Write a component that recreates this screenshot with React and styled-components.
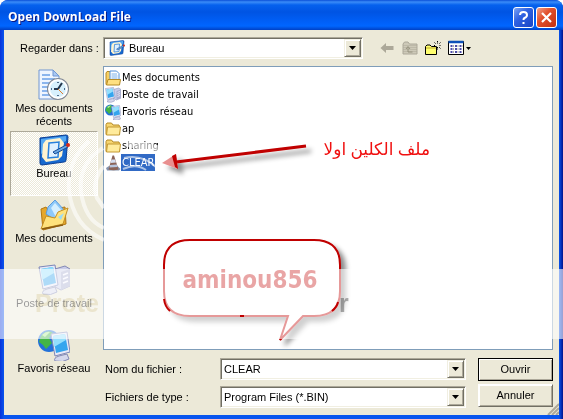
import { useState } from 'react';
import styled, { createGlobalStyle } from 'styled-components';

const places = [
  { id: 'recent', label: 'Mes documents récents' },
  { id: 'desktop', label: 'Bureau' },
  { id: 'documents', label: 'Mes documents' },
  { id: 'computer', label: 'Poste de travail' },
  { id: 'network', label: 'Favoris réseau' },
];

const files = [
  { name: 'Mes documents', icon: 'docfolder' },
  { name: 'Poste de travail', icon: 'computer' },
  { name: 'Favoris réseau', icon: 'network' },
  { name: 'ap', icon: 'folder' },
  { name: 'sharing', icon: 'folder' },
  { name: 'CLEAR', icon: 'cone' },
];

/* icons, all drawn on a 32 unit grid */
const Monitor = () => (
  <>
    <path d='M9 25 L17 23 L19 28 Q13 32 5 30 Q3 27 9 25Z' fill='#d5d8ec' stroke='#8489b5' />
    <path d='M1 3 L17 1 L20 21 L5 25Z' fill='#e8e9f7' stroke='#7d86b8' />
    <path d='M3 5 L15 3 L18 19 L6 22Z' fill='#35a5ee' />
    <path d='M3 5 L15 3 L16 9 L4 16Z' fill='#93defc' />
  </>
);

const drawings = {
  recent: (
    <>
      <path d='M1 1 H15 L21 7 V30 H1Z' fill='#eef5ff' stroke='#7096d2' />
      <path d='M15 1 V7 H21Z' fill='#a9c9f4' stroke='#7096d2' />
      <path d='M4 6 H12 M4 10 H17 M4 14 H12 M4 18 H10 M4 22 H10 M4 26 H12' stroke='#8bb5ed' strokeWidth='2' />
      <circle cx='20' cy='20' r='11' fill='#7f8793' />
      <circle cx='20' cy='20' r='9' fill='#d7f0fc' stroke='#fff' strokeWidth='2' />
      <path d='M20 13 V14 M27 20 H26 M20 27 V26 M13 20 H14' stroke='#506c8a' strokeWidth='2' />
      <path d='M24 14 L20 20 H16' fill='none' stroke='#26394f' strokeWidth='2' />
      <path d='M20 20 L25 25' stroke='#e07c2c' strokeWidth='1' />
    </>
  ),
  desktop: (
    <>
      <path d='M2 4 L28 1 Q30 1 30 3 L28 26 Q28 28 26 28 L4 31 Q2 31 2 29Z' fill='#1769cf' stroke='#0a3e94' />
      <path d='M3 5 L28 2 L28 7 L3 20Z' fill='#55a8f2' />
      <path d='M8 6 L22 4 L26 9 L24 22 L20 26 L8 28 L4 23 L5 10Z' fill='#fff3cf' />
      <path d='M11 9 L21 8 L20 23 L10 24Z' fill='#dff0ff' stroke='#2980dc' strokeWidth='1.5' />
      <path d='M15 18 L28 11 L30 13 L17 20Z' fill='#6aa8e4' stroke='#174a94' />
      <circle cx='30' cy='11' r='2' fill='#d82b18' />
    </>
  ),
  documents: (
    <>
      <path d='M3 10 L8 8 L10 11 L27 8 L28 25 L5 31Z' fill='#e5a72b' stroke='#b27814' />
      <path d='M10 8 L17 1 L27 12 L19 22 L8 15Z' fill='#8ec9fa' stroke='#599bdc' />
      <path d='M13 9 L17 4 L24 12 L18 18Z' fill='#d5efff' />
      <path d='M3 30 L8 17 L17 19 L20 13 L30 9 L25 25Z' fill='#ffe27c' stroke='#c58f22' />
      <path d='M20 18 L26 14 L23 21Z' fill='#9cdaf5' />
      <path d='M4 30 L25 26' stroke='#8b5c12' strokeWidth='1.5' />
    </>
  ),
  computer: (
    <>
      <path d='M17 5 L27 2 L32 5 V22 L23 26 L17 23Z' fill='#c9cce8' stroke='#8489b5' />
      <path d='M23 8 L32 5 V22 L23 26Z' fill='#a9adcf' />
      <path d='M25 11 L30 9 M25 15 L30 13 M25 19 L30 17' stroke='#f5f6ff' strokeWidth='1.5' />
      <Monitor />
    </>
  ),
  network: (
    <>
      <circle cx='11' cy='12' r='11' fill='#2371d9' />
      <path d='M3 7 Q9 0 15 4 L11 9 L14 14 L8 20 L5 16 L1 13Z' fill='#43b546' />
      <path d='M4 6 Q8 2 12 3 L7 8Z' fill='#b2ee92' />
      <g transform='translate(12 2)'>
        <Monitor />
      </g>
    </>
  ),
  folder: (
    <>
      <path d='M2 7 L4 4 H13 L16 8 H28 L29 11 V27 H2Z' fill='#f6d571' stroke='#b58a25' strokeWidth='2' />
      <path d='M5 12 H31 L29 28 H3Z' fill='#ffeb9c' stroke='#c39831' strokeWidth='2' />
    </>
  ),
  docfolder: (
    <>
      <path d='M2 6 L4 3 H12 V29 H2Z' fill='#f6cf63' stroke='#b58a25' strokeWidth='2' />
      <path d='M10 2 H23 L28 7 V22 H10Z' fill='#fff' stroke='#4f8dd8' strokeWidth='2' />
      <path d='M13 8 H24 M13 12 H25 M13 16 H25' stroke='#78afe9' strokeWidth='2' />
      <path d='M6 19 H31 L29 30 H3Z' fill='#ffe082' stroke='#b58a25' strokeWidth='2' />
    </>
  ),
  cone: (
    <>
      <path d='M2 26 L8 22 H25 L31 28 L28 31 H4Z' fill='#8493ae' />
      <path d='M15 1 H18 L27 29 Q17 32 7 29Z' fill='#8b6458' />
      <path d='M13 9 L20 9 L22 15 L11 16Z' fill='#d5e0f2' />
      <path d='M10 20 L24 19 L25 24 L9 25Z' fill='#b7c6df' />
    </>
  ),
  back: <path d='M3 16 L14 6 V12 H29 V20 H14 V26Z' fill='#aca899' />,
  up: (
    <>
      <path d='M2 28 V8 L5 4 H12 L15 8 H30 V28Z' fill='#cdc9b8' stroke='#aca899' strokeWidth='2' />
      <path d='M3 11 H29 M3 15 H29 M3 19 H29 M3 23 H29' stroke='#aca899' strokeWidth='2' strokeDasharray='2 2' />
      <path d='M12 24 V15 M8 18 L12 13 L16 18 M12 24 H21' fill='none' stroke='#96927f' strokeWidth='2' />
    </>
  ),
  newfolder: (
    <>
      <path d='M1 29 V13 L4 10 H10 L13 13 H23 V29Z' fill='#ffff70' stroke='#000' strokeWidth='2' />
      <path d='M2 16 H22' stroke='#bba72b' strokeWidth='2' />
      <path d='M25 2 V8 M25 14 V20 M18 11 H21 M29 11 H32 M19 5 L22 8 M31 5 L28 8 M28 14 L31 17' stroke='#000' strokeWidth='2' strokeDasharray='2 1' />
    </>
  ),
  views: (
    <>
      <path d='M1 3 H31 V29 H1Z' fill='#fff' stroke='#000' strokeWidth='2' />
      <path d='M1 4 H31' stroke='#0d50b9' strokeWidth='5' />
      <path d='M5 12 H9 M14 12 H18 M23 12 H27 M5 18 H9 M14 18 H18 M23 18 H27 M5 24 H9 M14 24 H18 M23 24 H27' stroke='#12128c' strokeWidth='3' />
      <path d='M10 12 H12 M19 12 H21 M28 12 H29 M10 18 H12 M19 18 H21 M10 24 H12 M19 24 H21' stroke='#555' strokeWidth='2' />
    </>
  ),
};

const Icon = ({ name, size = 16 }) => (
  <svg width={size} height={size} viewBox='0 0 32 32' aria-hidden='true'>
    {drawings[name]}
  </svg>
);

const Triangle = () => (
  <svg width='7' height='4' viewBox='0 0 7 4' aria-hidden='true'>
    <path d='M0 0 H7 L3.5 4Z' fill='#000' />
  </svg>
);

const App = () => {
  const [place, setPlace] = useState('desktop');
  const [selected, setSelected] = useState('CLEAR');
  const [fileName, setFileName] = useState('CLEAR');

  const pickFile = (name) => {
    setSelected(name);
    setFileName(name);
  };

  return (
    <>
      <GlobalStyle />
      <Window>
        <TitleBar>
          <h1>Open DownLoad File</h1>
          <CaptionButton type='button' aria-label='Aide'>
            <svg width='19' height='19' viewBox='0 0 19 19'>
              <path d='M6 7 Q6 4 9.500 4 Q13 4 13 7 Q13 9 10.500 10 Q9.500 10.500 9.500 12 M9.500 14 V16' fill='none' stroke='#fff' strokeWidth='2' />
            </svg>
          </CaptionButton>
          <CaptionButton type='button' aria-label='Fermer' $close>
            <svg width='19' height='19' viewBox='0 0 19 19'>
              <path d='M5 5 L14 14 M14 5 L5 14' stroke='#fff' strokeWidth='2.200' />
            </svg>
          </CaptionButton>
        </TitleBar>

        <Body>
          <LookIn>
            <label htmlFor='folder'>Regarder dans :</label>
            <Combo>
              <Icon name='desktop' />
              <select id='folder'>
                <option>Bureau</option>
              </select>
              <Arrow>
                <Triangle />
              </Arrow>
            </Combo>
            <Toolbar>
              <ToolButton type='button' aria-label='Précédent' disabled>
                <Icon name='back' />
              </ToolButton>
              <ToolButton type='button' aria-label='Dossier parent' disabled>
                <Icon name='up' />
              </ToolButton>
              <ToolButton type='button' aria-label='Nouveau dossier'>
                <Icon name='newfolder' />
              </ToolButton>
              <ToolButton type='button' aria-label='Affichage'>
                <Icon name='views' />
                <svg width='5' height='3' viewBox='0 0 5 3' aria-hidden='true'>
                  <path d='M0 0 H5 L2.5 3Z' fill='#000' />
                </svg>
              </ToolButton>
            </Toolbar>
          </LookIn>

          <Columns>
            <Places>
              {places.map(({ id, label }) => (
                <Place key={id} type='button' $active={place === id} onClick={() => setPlace(id)}>
                  <Icon name={id} size={32} />
                  <span>{label}</span>
                </Place>
              ))}
            </Places>

            <Main>
              <FileList>
                {files.map(({ name, icon }) => (
                  <li key={name}>
                    <FileButton type='button' $active={selected === name} onClick={() => pickFile(name)}>
                      <Icon name={icon} />
                      <span>{name}</span>
                    </FileButton>
                  </li>
                ))}
              </FileList>

              <Footer>
                <Fields>
                  <label htmlFor='name'>Nom du fichier :</label>
                  <Combo>
                    <input id='name' value={fileName} onChange={(e) => setFileName(e.target.value)} />
                    <Arrow>
                      <Triangle />
                    </Arrow>
                  </Combo>
                  <label htmlFor='type'>Fichiers de type :</label>
                  <Combo>
                    <select id='type'>
                      <option>Program Files (*.BIN)</option>
                    </select>
                    <Arrow>
                      <Triangle />
                    </Arrow>
                  </Combo>
                </Fields>
                <Actions>
                  <DialogButton type='button' $primary>
                    Ouvrir
                  </DialogButton>
                  <DialogButton type='button'>Annuler</DialogButton>
                </Actions>
              </Footer>
            </Main>
          </Columns>
        </Body>
        <Grip width='12' height='12' viewBox='0 0 12 12' aria-hidden='true'>
          <path d='M1 12 L12 1 M5 12 L12 5 M9 12 L12 9' stroke='#aca899' strokeWidth='2' />
        </Grip>

        {/* notes and watermark over the dialog */}
        <Overlay>
          <defs>
            <filter id='shadow' x='-20%' y='-20%' width='150%' height='160%'>
              <feDropShadow dx='5' dy='5' stdDeviation='2.500' floodColor='#000' floodOpacity='.45' />
            </filter>
          </defs>
          <g filter='url(#shadow)'>
            <path d='M306 146 L176 162' stroke='#c00000' strokeWidth='3' />
            <path d='M162 163 L176 154 L178 169Z' fill='#e88f8f' />
            <path d='M172 156 L176 154 L178 169 L175 167Z' fill='#c00000' />
          </g>
          <Note x='430' y='155' direction='rtl'>ملف الكلين اولا</Note>
          <path
            d='M190 240 H314 Q340 240 340 265 V291 Q340 316 314 316 H303 L280 340 L288 316 H190 Q164 316 164 291 V265 Q164 240 190 240Z'
            fill='#fff'
            stroke='#c00000'
            strokeWidth='2'
            filter='url(#shadow)'
          />
          <Signature x='250' y='288' textAnchor='middle'>aminou856</Signature>
          <g fill='none' stroke='#fff' strokeWidth='4' opacity='.6'>
            <path d='M89 141 Q67 160 69 191 Q73 226 104 240' />
            <path d='M103 148 Q78 163 81 192 Q85 220 104 228' />
            <path d='M104 166 Q91 181 97 198 L104 208' />
            <path d='M126 142 L159 150' strokeWidth='9' />
            <path d='M124 158 Q142 154 156 167' strokeWidth='2' />
            <path d='M123 169 Q136 163 146 170' strokeWidth='2' />
          </g>
          <rect x='0' y='269' width='100%' height='70' fill='#fff' opacity='.6' />
          <path d='M164 299 Q165 307 170 311 M240 316 H244 M332 311 Q337 307 338 302' fill='none' stroke='#c00000' strokeWidth='2' />
        </Overlay>
        <Overlay $multiply>
          <Watermark x='35' y='312'>Prote</Watermark>
          <Watermark x='339' y='312' $dark>r</Watermark>
        </Overlay>
      </Window>
    </>
  );
};
export default App;

const GlobalStyle = createGlobalStyle`
  * {
    box-sizing: border-box;
  }
  body {
    margin: 0;
    background: #fff;
    color: #000;
    font: 11px/13px 'Liberation Sans', sans-serif;
  }
  button, input, select {
    font: inherit;
    color: inherit;
    margin: 0;
    padding: 0;
  }
  svg {
    display: block;
    flex: none;
  }
`;

const Window = styled.main`
  position: relative;
  display: flex;
  flex-direction: column;
  min-height: 100vh;
  padding: 0 4px 4px;
  border-radius: 8px 8px 0 0;
  background: linear-gradient(90deg, #0831d9, #0855ee 4px, #0855ee calc(100% - 4px), #00138c);
  overflow: hidden;
`;

const TitleBar = styled.header`
  display: flex;
  align-items: center;
  gap: 2px;
  height: 30px;
  margin: 0 -4px;
  padding: 4px 6px 0 8px;
  background: linear-gradient(#0a4fd8, #3a8cf8 2px, #0561ee 5px, #0054e3 12px, #0060f8 22px, #0066ff 26px, #0040c4);

  h1 {
    flex: 1;
    margin: 0;
    color: #fff;
    font: bold 12px/18px 'Open Sans', sans-serif;
    text-shadow: 1px 1px #0a1883;
  }
`;

const CaptionButton = styled.button`
  width: 21px;
  height: 21px;
  border: 1px solid #fff;
  border-radius: 3px;
  background: ${({ $close }) =>
    $close ? 'linear-gradient(135deg, #f0a08a, #e2502c 40%, #c23010)' : 'linear-gradient(135deg, #7ba4f4, #2f62e2 40%, #1a44c4)'};
`;

const Body = styled.div`
  display: flex;
  flex: 1;
  flex-direction: column;
  gap: 7px;
  padding: 7px 6px;
  background: #ece9d8;
`;

const LookIn = styled.div`
  display: flex;
  align-items: center;

  label {
    width: 93px;
    padding-left: 10px;
  }
`;

const Combo = styled.div`
  display: flex;
  flex: 1;
  align-items: center;
  min-width: 0;
  height: 22px;
  padding: 1px;
  border: 1px solid;
  border-color: #aca899 #fff #fff #aca899;
  background: #fff;
  box-shadow: inset 1px 1px #716f64, inset -1px -1px #f1efe2;

  > svg {
    margin-left: 4px;
  }
  input, select {
    flex: 1;
    min-width: 0;
    height: 16px;
    padding: 0 2px;
    border: 0;
    outline: 0;
    background: none;
    appearance: none;
  }
  > svg + select {
    padding-left: 4px;
  }
`;

const Arrow = styled.span`
  display: grid;
  place-items: center;
  width: 17px;
  height: 18px;
  border: 1px solid;
  border-color: #f1efe2 #716f64 #716f64 #f1efe2;
  background: #ece9d8;
  box-shadow: inset 1px 1px #fff, inset -1px -1px #aca899;
  pointer-events: none;
`;

const Toolbar = styled.div`
  display: flex;
  gap: 7px;
  width: 190px;
  padding-left: 16px;
`;

const ToolButton = styled.button`
  display: flex;
  align-items: center;
  gap: 2px;
  border: 0;
  background: none;
`;

const Columns = styled.div`
  display: flex;
  flex: 1;
  gap: 5px;
`;

const Places = styled.nav`
  flex: none;
  width: 88px;
`;

const Place = styled.button`
  display: flex;
  flex-direction: column;
  align-items: center;
  gap: 1px;
  width: 100%;
  height: 65px;
  padding: 2px;
  border: 1px solid;
  border-color: ${({ $active }) => ($active ? '#aca899 #fff #fff #aca899' : 'transparent')};
  background: ${({ $active }) =>
    $active ? 'repeating-conic-gradient(#fff 0 25%, #ece9d8 0 50%) 0 0 / 2px 2px' : 'none'};
`;

const Main = styled.div`
  display: flex;
  flex: 1;
  flex-direction: column;
  gap: 8px;
  min-width: 0;
`;

const FileList = styled.ul`
  flex: 1;
  margin: 0;
  padding: 2px 1px;
  border: 1px solid #7f9db9;
  background: #fff;
  list-style: none;
`;

const FileButton = styled.button`
  display: flex;
  align-items: center;
  height: 17px;
  border: 0;
  background: none;
  font: 11px/17px 'DejaVu Sans Condensed', 'DejaVu Sans', sans-serif;

  span {
    padding: 0 1px;
    color: ${({ $active }) => ($active ? '#fff' : '#000')};
    background: ${({ $active }) => ($active ? '#316ac5' : 'none')};
  }
`;

const Footer = styled.div`
  display: flex;
  gap: 12px;
`;

const Fields = styled.div`
  display: grid;
  flex: 1;
  grid-template-columns: 115px 1fr;
  align-items: center;
  gap: 6px 0;
  padding-left: 2px;
`;

const Actions = styled.div`
  display: flex;
  flex-direction: column;
  gap: 3px;
  width: 75px;
`;

const DialogButton = styled.button`
  height: 23px;
  border: 1px solid;
  border-color: ${({ $primary }) => ($primary ? '#000' : '#fff #716f64 #716f64 #fff')};
  background: #ece9d8;
  box-shadow: inset 1px 1px #fff, inset -1px -1px #aca899;
`;

const Grip = styled.svg`
  position: absolute;
  right: 4px;
  bottom: 4px;
`;

const Overlay = styled.svg`
  position: absolute;
  inset: 0;
  width: 100%;
  height: 100%;
  pointer-events: none;
  mix-blend-mode: ${({ $multiply }) => ($multiply ? 'multiply' : 'normal')};
`;

const Note = styled.text`
  fill: #f01010;
  font: 17px 'Liberation Serif', 'DejaVu Sans', serif;
`;

const Signature = styled.text`
  fill: #c81e1e;
  font: bold 24px 'DejaVu Sans Condensed', sans-serif;
`;

const Watermark = styled.text`
  fill: ${({ $dark }) => ($dark ? '#b0b0b0' : '#f3eedc')};
  font: bold 25px 'Liberation Sans', sans-serif;
`;
